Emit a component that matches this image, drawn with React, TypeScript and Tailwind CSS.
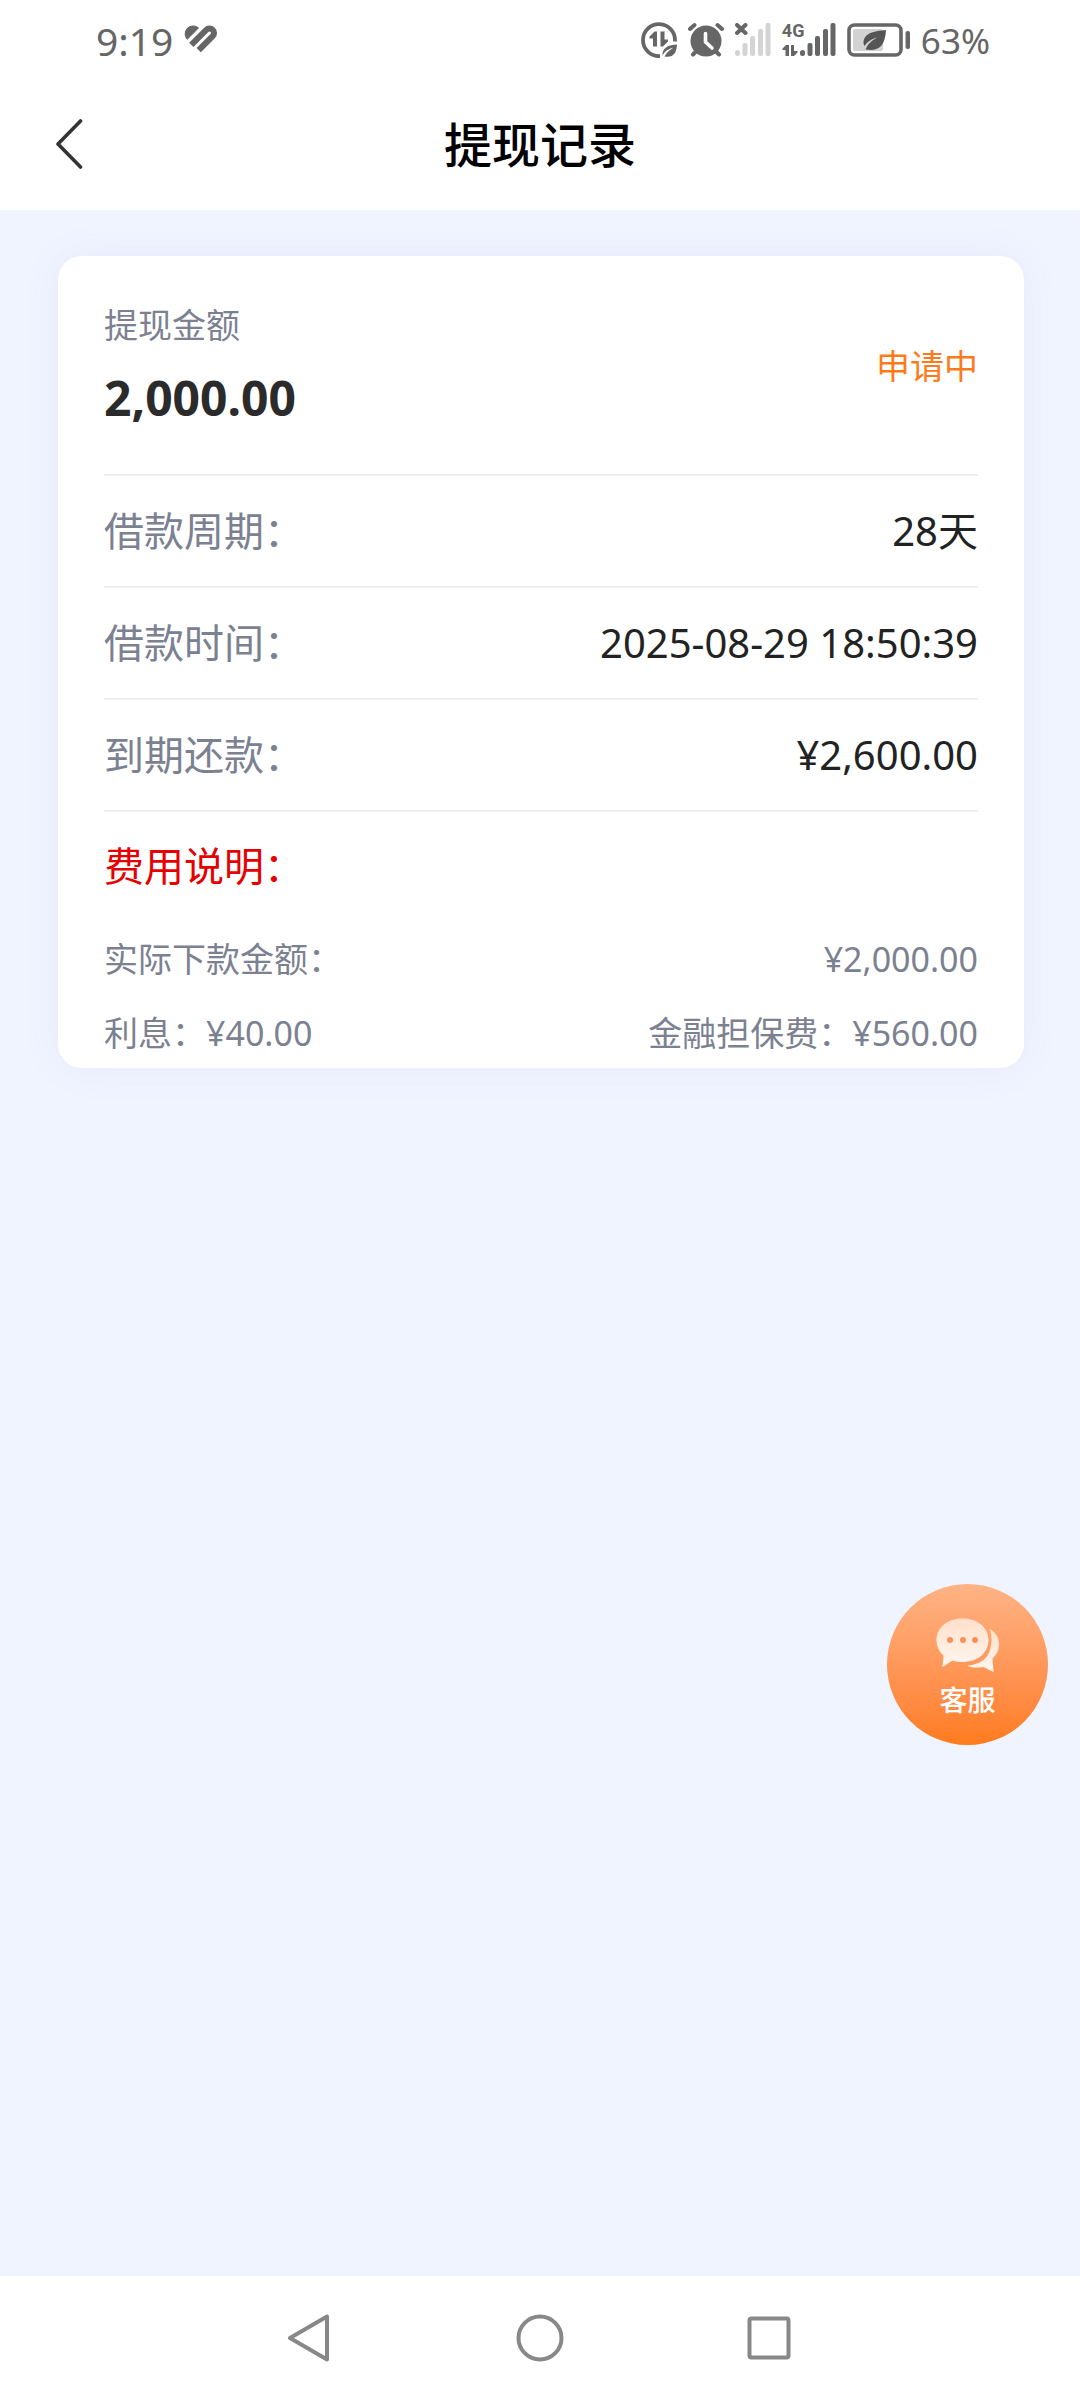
interface DetailRow {
  label: string
  value: string
}

const details: DetailRow[] = [
  { label: '借款周期：', value: '28天' },
  { label: '借款时间：', value: '2025-08-29 18:50:39' },
  { label: '到期还款：', value: '¥2,600.00' }
]

function HeartIcon() {
  return (
    <svg width="34" height="30" viewBox="0 0 34 30" fill="none" aria-hidden="true">
      <path d="M14.500 3L3.200 14.300A8 8 0 0 1 14.500 3Z" fill="#666" stroke="#666" />
      <path d="M7.300 19.800L22.300 4.800A4.500 4.500 0 0 1 28.700 11.200L14.700 25.200" stroke="#666" strokeWidth="6" />
    </svg>
  )
}

function DataSaverIcon() {
  return (
    <svg width="36" height="36" viewBox="0 0 36 36" fill="none" aria-hidden="true">
      <path d="M19 34A16 16 0 1 1 33.900 19.500" stroke="#666" strokeWidth="3.800" />
      <path d="M16 9.500V24.500H12V16.500H8.500V14.500L13.500 9.500Z" fill="#666" />
      <path d="M19.500 9.500H23.500V17.500H27V19.500L22 24.500H19.500Z" fill="#666" />
      <path d="M36 22.500C27.500 22.500 21 26 21.500 33.500C25 27.500 29.500 26.500 32.500 25.500C28.500 28 25.500 30.500 23.500 34.500C32.500 36 35.500 31 36 22.500Z" fill="#666" />
    </svg>
  )
}

function AlarmIcon() {
  return (
    <svg width="36" height="36" viewBox="0 0 36 36" fill="none" aria-hidden="true">
      <circle cx="18" cy="19" r="15.500" fill="#666" />
      <path d="M2 7L6.500 3M34 7L29.500 3M5 32.500L9 28.500M31 32.500L27 28.500" stroke="#666" strokeWidth="4" strokeLinecap="round" />
      <path d="M17.500 11.500V20L24 26" stroke="#fff" strokeWidth="3.600" strokeLinecap="round" strokeLinejoin="round" />
    </svg>
  )
}

function SignalBars({ color, crossed }: { color: string; crossed?: boolean }) {
  return (
    <svg width="36" height="34" viewBox="0 0 36 34" fill="none" aria-hidden="true">
      <g fill={color}>
        <rect x="0" y="27" width="5" height="6" rx="2.500" />
        <rect x="7.500" y="20" width="5" height="13" rx="2" />
        <rect x="15" y="13" width="5" height="20" rx="2" />
        <rect x="23" y="6" width="5" height="27" rx="2" />
        <rect x="30.500" y="0" width="5" height="33" rx="2" />
      </g>
      {crossed && (
        <path d="M2 2L10.500 10M10.500 2L2 10" stroke="#666" strokeWidth="4" strokeLinecap="round" />
      )}
    </svg>
  )
}

function BatteryIcon() {
  return (
    <svg width="63" height="34" viewBox="0 0 63 34" fill="none" aria-hidden="true">
      <rect x="2" y="2" width="52" height="30" rx="5.500" stroke="#666" strokeWidth="3.600" />
      <rect x="6" y="6" width="30" height="22" rx="2" fill="#d2d2d2" />
      <rect x="58.500" y="8" width="4.500" height="18" rx="2" fill="#666" />
      <path d="M39 7C27 8 17 10 16.500 19.500C16.500 21 17 22 17.500 23C21 18 25 16 30 14.500C25 17.500 21 20.500 18.500 26.500C31 28.500 38 24 39 7Z" fill="#555" />
    </svg>
  )
}

function ChatIcon() {
  return (
    <svg width="64" height="56" viewBox="0 0 64 56" fill="none" aria-hidden="true">
      <defs>
        <linearGradient id="bubble" x1="0" y1="0" x2="0" y2="1">
          <stop offset="0" stopColor="#ffe0cb" />
          <stop offset="1" stopColor="#fff6f0" />
        </linearGradient>
      </defs>
      <path d="M54 11C60.500 15 63.500 21 63 27.500C62.700 32.500 60.500 37 56.500 40.500L57.500 54L47.500 49C42 50 35.500 50 31.500 47.500C44 46.500 51.500 40.500 54 32C56 25 56 18 54 11Z" fill="url(#bubble)" />
      <path d="M26.500 0.500C41.500 0.500 52.500 9.500 52.500 22C52.500 35 41.500 44 26.500 44C23 44 19.500 43.500 16.500 42.500L6.500 49L7.500 37.500C3 33.500 0.500 28 0.500 22C0.500 9.500 11.500 0.500 26.500 0.500Z" fill="url(#bubble)" />
      <g fill="#f9925a">
        <circle cx="14" cy="22" r="3" />
        <circle cx="27" cy="22" r="3" />
        <circle cx="39" cy="22" r="3" />
      </g>
    </svg>
  )
}

function StatusBar() {
  return (
    <div className="flex h-20 items-center justify-between pr-[90px] pl-24 text-[#666]">
      <div className="flex items-center gap-[11px]">
        <span className="text-[39px] leading-none">9:19</span>
        <HeartIcon />
      </div>
      <div className="flex items-center gap-[11px]">
        <DataSaverIcon />
        <AlarmIcon />
        <SignalBars color="#d4d4d4" crossed />
        <div className="flex items-end">
          <div className="flex h-[34px] w-[18px] flex-col justify-between">
            <span className="font-[Roboto] text-[18px] leading-4 font-bold">4G</span>
            <svg width="16" height="13" viewBox="0 0 16 13" fill="none" aria-hidden="true">
              <path d="M7 1V12H3.500V6H0.500V4.500L4 1Z" fill="#666" />
              <path d="M9 1H12V7H15.500V8.500L12 12H9Z" fill="#666" />
            </svg>
          </div>
          <SignalBars color="#666" />
        </div>
        <BatteryIcon />
        <span className="text-[35px] leading-none">63%</span>
      </div>
    </div>
  )
}

function Header() {
  return (
    <header className="grid h-[130px] grid-cols-[1fr_auto_1fr] items-start bg-white px-12 pt-7">
      <button type="button" aria-label="返回" className="flex h-[72px] w-12 items-center pl-2">
        <svg width="28" height="50" viewBox="0 0 28 50" fill="none" aria-hidden="true">
          <path d="M24.500 2L2 25L24.500 48" stroke="#333" strokeWidth="3.600" strokeLinecap="round" strokeLinejoin="round" />
        </svg>
      </button>
      <h1 className="text-[48px] leading-[74px] font-medium text-black">提现记录</h1>
    </header>
  )
}

function RecordCard() {
  return (
    <section className="rounded-3xl bg-white px-[46px] shadow-[0_0_40px_rgba(120,100,190,0.07)]">
      <div className="flex items-center justify-between border-b-2 border-[#eee] pt-[46px] pb-11">
        <div>
          <p className="text-[34px] leading-[46px] text-[#7c8191]">提现金额</p>
          <p className="mt-[18px] text-[48px] leading-[64px] font-bold text-[#2b2b2b]">2,000.00</p>
        </div>
        <span className="text-[34px] leading-[46px] text-[#ff7a1c]">申请中</span>
      </div>

      <dl>
        {details.map((row) => (
          <div
            key={row.label}
            className="flex h-28 items-center justify-between border-b-2 border-[#f0f0f0] text-[40px] leading-[60px]"
          >
            <dt className="text-[#7c8191]">{row.label}</dt>
            <dd className="text-[#222]">{row.value}</dd>
          </div>
        ))}
      </dl>

      <h2 className="pt-6 text-[40px] leading-[60px] text-[#e60000]">费用说明：</h2>
      <div className="flex flex-col gap-7 pt-10 pb-3 text-[34px] leading-[46px] text-[#7c8191]">
        <div className="flex justify-between">
          <span>实际下款金额：</span>
          <span>¥2,000.00</span>
        </div>
        <div className="flex justify-between">
          <span>利息：¥40.00</span>
          <span>金融担保费：¥560.00</span>
        </div>
      </div>
    </section>
  )
}

function SystemNav() {
  return (
    <nav className="grid h-[124px] grid-cols-3 place-items-center bg-white px-[18%] text-[#888]">
      <button type="button" aria-label="后退">
        <svg width="48" height="48" viewBox="0 0 48 48" fill="none" stroke="currentColor" strokeWidth="4" strokeLinejoin="round" aria-hidden="true">
          <path d="M41 2.500V45.500L4 24Z" />
        </svg>
      </button>
      <button type="button" aria-label="主页">
        <svg width="48" height="48" viewBox="0 0 48 48" fill="none" stroke="currentColor" strokeWidth="4" aria-hidden="true">
          <circle cx="24" cy="24" r="21.500" />
        </svg>
      </button>
      <button type="button" aria-label="最近任务">
        <svg width="48" height="48" viewBox="0 0 48 48" fill="none" stroke="currentColor" strokeWidth="4" aria-hidden="true">
          <rect x="3.500" y="4.500" width="39" height="39" rx="2" />
        </svg>
      </button>
    </nav>
  )
}

export default function App() {
  return (
    <div className="flex min-h-screen flex-col bg-[#f0f4ff] font-['Noto_Sans','Noto_Sans_CJK_SC',sans-serif]">
      <div className="bg-white">
        <StatusBar />
        <Header />
      </div>

      <main className="flex-1 pt-[46px] pr-14 pl-[58px]">
        <RecordCard />
      </main>

      <button
        type="button"
        className="fixed right-8 bottom-[655px] flex size-[161px] flex-col items-center rounded-full bg-linear-to-b from-[#ffb385] to-[#ff7b1a] pt-[34px] text-white"
      >
        <ChatIcon />
        <span className="mt-[6px] text-[28px] leading-10 font-medium">客服</span>
      </button>

      <SystemNav />
    </div>
  )
}
